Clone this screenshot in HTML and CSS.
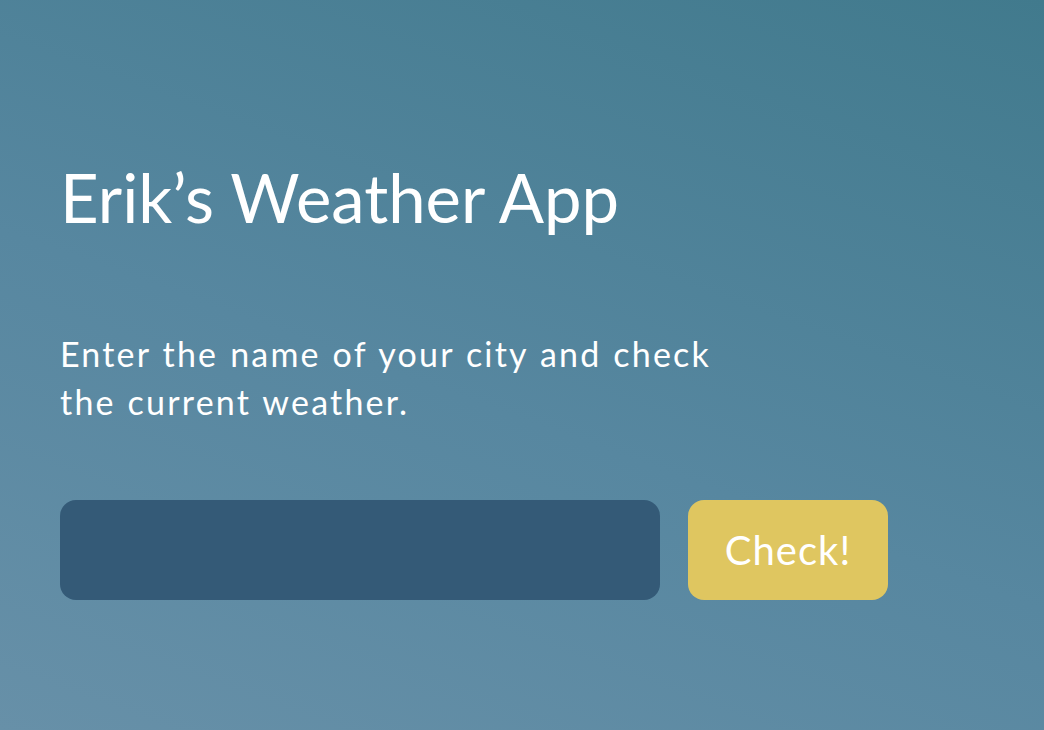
FILE: index.html
```html
<!DOCTYPE html>
<html lang="en">
<head>
<meta charset="utf-8">
<title>Erik's Weather App</title>
<link rel="stylesheet" href="styles.css">
</head>
<body>
<main class="app">
  <h1 class="title">Erik’s Weather App</h1>
  <p class="intro">Enter the name of your city and check the current weather.</p>
  <form class="search">
    <input class="city" type="text" aria-label="City">
    <button class="check" type="button">Check!</button>
  </form>
</main>
</body>
</html>
```
FILE: styles.css
```css
html, body {
  margin: 0;
  height: 100%;
}
body {
  background: linear-gradient(20deg, #6790a8 0%, #5787a0 45%, #417a8d 100%);
  color: #ffffff;
  font-family: Lato, "Open Sans", sans-serif;
  overflow: hidden;
}
.app {
  padding: 157px 60px 0 60px;
}
.title {
  margin: 0;
  font-size: 67px;
  line-height: 80px;
  font-weight: 400;
}
.intro {
  margin: 93px 0 0 0;
  max-width: 690px;
  font-size: 34px;
  line-height: 48px;
  letter-spacing: 2.2px;
  word-spacing: 1px;
}
.search {
  margin-top: 74px;
  display: flex;
  gap: 28px;
}
.city {
  width: 600px;
  height: 100px;
  box-sizing: border-box;
  border: none;
  border-radius: 16px;
  background: #345a77;
  color: #fff;
  font: inherit;
  font-size: 32px;
  padding: 0 24px;
  outline: none;
}
.check {
  width: 200px;
  height: 100px;
  border: none;
  border-radius: 16px;
  background: #dfc660;
  color: #fff;
  font-family: inherit;
  font-size: 40px;
  letter-spacing: 1px;
  padding: 0;
}
```
